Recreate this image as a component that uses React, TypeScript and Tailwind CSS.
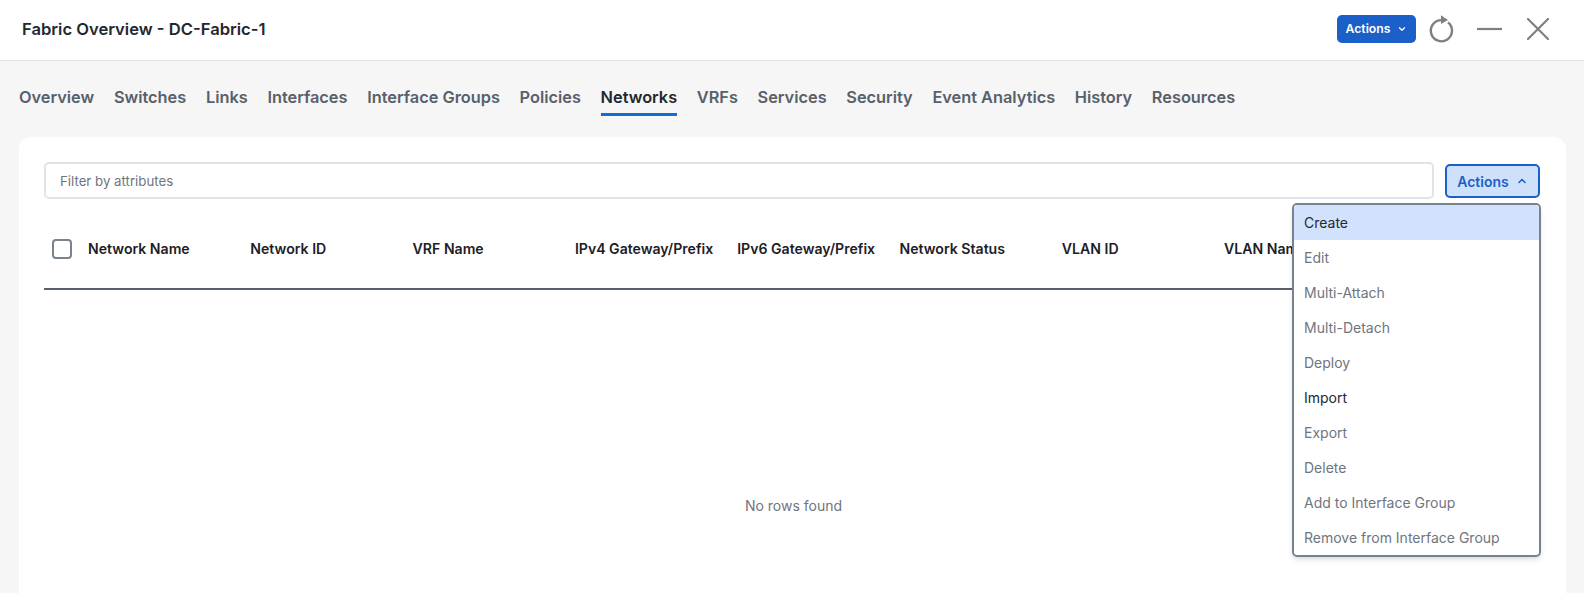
import { ChevronDown, ChevronUp } from "lucide-react";

const tabs = ["Overview", "Switches", "Links", "Interfaces", "Interface Groups", "Policies", "Networks", "VRFs", "Services", "Security", "Event Analytics", "History", "Resources"];
const columns = ["Network Name", "Network ID", "VRF Name", "IPv4 Gateway/Prefix", "IPv6 Gateway/Prefix", "Network Status", "VLAN ID", "VLAN Name"];
const menuItems = ["Create", "Edit", "Multi-Attach", "Multi-Detach", "Deploy", "Import", "Export", "Delete", "Add to Interface Group", "Remove from Interface Group"];

export default function App() {
  return (
    <div className="h-[593px] overflow-hidden bg-[#f6f6f6] font-['Inter',sans-serif] text-[#23282e]">
      <header className="flex h-[61px] items-center border-b border-[#dfdfdf] bg-white pb-[2px] pl-[22px] pr-[35px]">
        <h1 className="flex-1 text-[16.6px] font-semibold">Fabric Overview - DC-Fabric-1</h1>
        <button className="flex h-[28px] w-[79px] items-center justify-center gap-[7px] rounded-[5px] bg-[#1b5fc8] text-[12.2px] font-semibold text-white">
          Actions
          <ChevronDown size={10} strokeWidth={3} />
        </button>
        <svg className="ml-[12px]" width="27" height="30" viewBox="0 0 27 30" fill="none" stroke="#7f7f7f">
          <path d="M20 8.4A10.6 10.6 0 1 1 13.3 6.1" strokeWidth="2.4" />
          <path d="M13 1.3l7 4.7-7 4z" fill="#7f7f7f" stroke="none" />
        </svg>
        <svg className="ml-[22px]" width="25" height="4" viewBox="0 0 25 4">
          <path d="M0 2h25" stroke="#7f7f7f" strokeWidth="2.2" />
        </svg>
        <svg className="ml-[25px]" width="22" height="22" viewBox="0 0 22 22" fill="none" stroke="#7f7f7f" strokeWidth="2.2" strokeLinecap="round">
          <path d="M1 1l20 20M21 1L1 21" />
        </svg>
      </header>

      <nav className="flex h-[76px] items-start gap-[19.7px] pl-[19px] pt-[26px]">
        {tabs.map((tab) => (
          <div
            key={tab}
            className={
              tab === "Networks"
                ? "h-[29px] border-b-[3px] border-[#0d6ed8] text-[16.33px] leading-[20px] font-semibold text-[#23282e]"
                : "h-[29px] text-[16.33px] leading-[20px] font-semibold text-[#58606b]"
            }
          >
            {tab}
          </div>
        ))}
      </nav>

      <main className="relative ml-[19px] mr-[18px] h-[456px] rounded-t-[12px] bg-white px-[25px] pt-[25px]">
        <div className="flex items-center gap-[11px] pr-[1px]">
          <div className="flex h-[37px] flex-1 items-center rounded-[5px] border-2 border-[#e0e4e9] pl-[14px] pt-[2px] text-[13.25px] text-[#6f757e]">
            Filter by attributes
          </div>
          <button className="flex h-[34px] w-[95px] items-center justify-center gap-[7px] rounded-[5px] border-2 border-[#1b5fc8] bg-[#cfe0fb] pt-[1px] text-[14px] font-semibold text-[#1b5fc8]">
            Actions
            <ChevronUp size={12} strokeWidth={3} />
          </button>
        </div>

        <div className="flex h-[91px] items-center overflow-hidden border-b-2 border-[#58606b] pt-[10px]">
          <span className="ml-[8px] mr-[16px] mt-[1px] h-[20px] w-[20px] shrink-0 rounded-[4px] border-2 border-[#78838f]" />
          {columns.map((col) => (
            <div key={col} className="w-[162.3px] shrink-0 text-[14.1px] font-semibold whitespace-nowrap text-[#1c2026]">
              {col}
            </div>
          ))}
        </div>

        <p className="mt-[205px] pl-[2px] text-center text-[14px] text-[#6f757e]">No rows found</p>

        <ul className="absolute top-[66px] right-[25px] w-[249px] overflow-hidden rounded-[5px] border-2 border-[#78838f] bg-white shadow-md">
          {menuItems.map((item) => (
            <li
              key={item}
              className={
                item === "Create"
                  ? "flex h-[35px] items-center bg-[#d2e2fc] pl-[10px] text-[14px] text-[#23282e]"
                  : item === "Import"
                    ? "flex h-[35px] items-center pl-[10px] text-[14px] text-[#23282e]"
                    : "flex h-[35px] items-center pl-[10px] text-[14px] text-[#6f757e]"
              }
            >
              {item}
            </li>
          ))}
        </ul>
      </main>
    </div>
  );
}
